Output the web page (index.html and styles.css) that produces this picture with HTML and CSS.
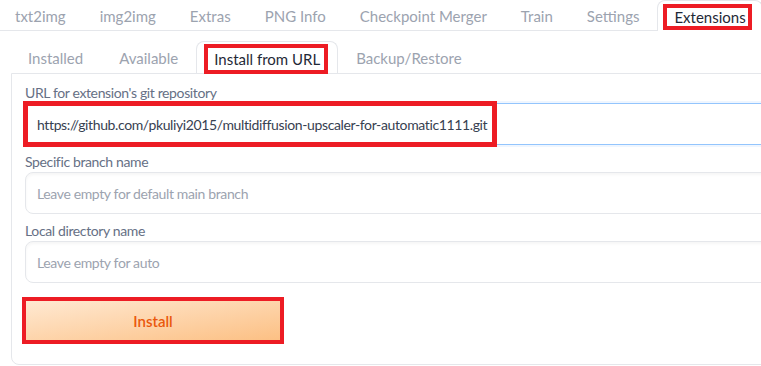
FILE: index.html
```html
<!doctype html>
<html lang=en>
<head>
<meta charset=utf-8>
<title>Extensions</title>
<link rel="stylesheet" href="styles.css">
</head>
<body>

<!-- main tabs -->

<nav class="tabs main-tabs">
	<button class="tab">txt2img</button>
	<button class="tab">img2img</button>
	<button class="tab">Extras</button>
	<button class="tab">PNG Info</button>
	<button class="tab">Checkpoint Merger</button>
	<button class="tab">Train</button>
	<button class="tab">Settings</button>
	<button class="tab selected"><span class="mark mark-top">Extensions</span></button>
</nav>

<!-- extension sub tabs -->

<section class="sub">
	<nav class="tabs sub-tabs">
		<button class="tab">Installed</button>
		<button class="tab">Available</button>
		<button class="tab selected"><span class="mark mark-sub">Install from URL</span></button>
		<button class="tab">Backup/Restore</button>
	</nav>

	<div class="panel">
		<label class="field">
			<span class="label">URL for extension's git repository</span>
			<span class="box">
				<input class="text focused" type="text" value="https://github.com/pkuliyi2015/multidiffusion-upscaler-for-automatic1111.git">
				<span class="mark-input"></span>
			</span>
		</label>

		<label class="field">
			<span class="label">Specific branch name</span>
			<input class="text" type="text" placeholder="Leave empty for default main branch">
		</label>

		<label class="field">
			<span class="label">Local directory name</span>
			<input class="text" type="text" placeholder="Leave empty for auto">
		</label>

		<button class="install">Install</button>
	</div>
</section>

</body>
</html>
```

FILE: styles.css
```css
/* ====  Base  ==== */

* {
	box-sizing: border-box;
}

html, body {
	margin:   0;
	height:   100%;
	overflow: hidden;
}

body {
	font-family: "Source Sans Pro", Lato, "Liberation Sans", sans-serif;
	background:  white;
	width:       960px;
}

button, input {
	font-family: inherit;
}


/* ====  Tabs  ==== */

.tabs {
	display:       flex;
	align-items:   stretch;
	border-bottom: 1px solid #e5e7eb;
}

.tab {
	background:  none;
	border:      1px solid transparent;
	border-bottom: 0;
	padding:     0 16px;
	font-size:   15px;
	color:       #9ca3af;
	white-space: nowrap;
	cursor:      pointer;
}

.tab.selected {
	color:         #1f2937;
	background:    white;
	border-color:  #e5e7eb;
	border-radius: 8px 8px 0 0;
	margin-bottom: -1px;
}

.main-tabs {
	height:      31px;
	margin-left: -2px;
}

.main-tabs .tab.selected {
	margin-left: 1px;
}

.sub {
	padding: 10px 0 0 11px;
}

.sub-tabs {
	height:        32px;
	border-bottom: 0;
	margin-left:   -1px;
}

.sub-tabs .tab {
	padding: 0 17px;
}

.sub-tabs .tab.selected {
	margin-bottom: 0;
}


/* ====  Red annotation boxes  ==== */

.mark {
	display:     inline-block;
	border:      4px solid #ed1c24;
	line-height: 18px;
}

.mark-top {
	padding: 0 2px 0 7px;
	margin:  2px -6px 0 -11px;
}

.mark-sub {
	padding: 2px 4px 2px 6px;
	margin:  2px -8px 0 -10px;
}

.mark-input {
	position: absolute;
	left:     -2px;
	top:      -2px;
	width:    474px;
	height:   46px;
	border:   5px solid #ed1c24;
}


/* ====  Panel  ==== */

.panel {
	border:        1px solid #e5e7eb;
	border-radius: 0 0 0 8px;
	padding:       10px 13px 20px 13px;
	display:       flex;
	flex-direction: column;
	gap:           8px;
}

.field {
	display:        flex;
	flex-direction: column;
	gap:            1px;
}

.label {
	font-size:      14px;
	line-height:    18px;
	letter-spacing: -0.37px;
	color:          #667085;
}

.box {
	position: relative;
	display:  block;
}

.text {
	display:        block;
	width:          100%;
	height:         42px;
	border:         1px solid #e5e7eb;
	border-radius:  8px;
	padding:        0 11px;
	font-size:      14px;
	letter-spacing: -0.37px;
	color:          #374151;
	box-shadow:     inset 0 2px 3px rgba(0, 0, 0, 0.04);
	outline:        0;
}

.text::placeholder {
	color: #9ca3af;
}

.text.focused {
	border-color: #93c5fd;
	box-shadow:   0 0 0 2px #eff6ff;
}

.install {
	margin:      6px 0 0 -3px;
	width:       262px;
	height:      47px;
	border:      4px solid #ed1c24;
	background:  linear-gradient(to bottom right, #ffe9d2, #fcc084);
	color:       #ea580c;
	font-size:   15px;
	font-weight: 600;
}
```
